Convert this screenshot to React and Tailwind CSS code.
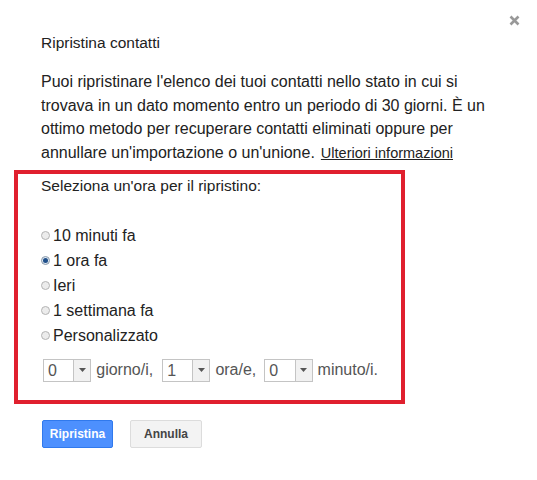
import React, { useState } from 'react'

const options = ['10 minuti fa', '1 ora fa', 'Ieri', '1 settimana fa', 'Personalizzato']

function Select({ value }) {
  return (
    <div className="flex h-[23px] w-[51px] border border-[#c4c4c4] bg-white">
      <div className="flex-1 pl-[4px] text-[16px] leading-[21px] text-[#555]">{value}</div>
      <div className="flex w-[17px] items-center justify-center border-l border-[#c4c4c4] bg-[#f1f1f1]">
        <svg width="7" height="4" viewBox="0 0 7 4">
          <path d="M0 0h7L3.5 4z" fill="#555" />
        </svg>
      </div>
    </div>
  )
}

export default function App() {
  const [selected, setSelected] = useState(1)

  return (
    <div className="relative h-[480px] w-[537px] bg-white font-['Liberation_Sans',Arial,sans-serif] text-[#222]">
      <button className="absolute right-[17px] top-[15px]">
        <svg width="11" height="11" viewBox="0 0 11 11">
          <path d="M1.5 1.5l8 8M9.5 1.5l-8 8" stroke="#999" strokeWidth="2.6" />
        </svg>
      </button>

      <div className="px-[41px] pt-[33px]">
        <h1 className="text-[15.5px] leading-[20px]">Ripristina contatti</h1>
        <p className="mt-[17px] text-[16px] leading-[23.5px]">
          Puoi ripristinare l'elenco dei tuoi contatti nello stato in cui si trovava in un dato
          momento entro un periodo di 30 giorni. È un ottimo metodo per recuperare contatti
          eliminati oppure per annullare un'importazione o un'unione.
          <a href="#" className="ml-[6px] text-[14.5px] leading-[20px] text-[#222] underline">
            Ulteriori informazioni
          </a>
        </p>
      </div>

      <div className="ml-[14px] mt-[6px] h-[234px] w-[391px] border-[4px] border-[#e0202e] px-[23px] pt-[2px]">
        <div className="text-[15.5px] leading-[20px]">Seleziona un'ora per il ripristino:</div>
        <div className="mt-[27px] flex flex-col">
          {options.map((o, i) => (
            <label key={o} className="flex h-[25px] items-center gap-[3px] text-[16px]" onClick={() => setSelected(i)}>
              <span
                className={
                  i === selected
                    ? 'flex h-[9px] w-[9px] items-center justify-center rounded-full border border-[#8a9aab] bg-[#dfe8f1]'
                    : 'h-[9px] w-[9px] rounded-full border border-[#b4b4b4] bg-[#ececec]'
                }
              >
                {i === selected && <span className="h-[5px] w-[5px] rounded-full bg-[#1f4f8a]" />}
              </span>
              <span>{o}</span>
            </label>
          ))}
        </div>
        <div className="ml-[2px] mt-[10px] flex items-center text-[16px] text-[#555]">
          <Select value="0" />
          <span className="ml-[5px] mr-[9px]">giorno/i,</span>
          <Select value="1" />
          <span className="ml-[5px] mr-[8px]">ora/e,</span>
          <Select value="0" />
          <span className="ml-[5px]">minuto/i.</span>
        </div>
      </div>

      <div className="ml-[42px] mt-[16px] flex gap-[17px]">
        <button className="h-[28px] w-[71px] rounded-[2px] border border-[#3079ed] bg-[#4d90fe] text-[12px] font-bold text-white">
          Ripristina
        </button>
        <button className="h-[28px] w-[72px] rounded-[2px] border border-[#dcdcdc] bg-[#f3f3f3] text-[12px] font-bold text-[#444]">
          Annulla
        </button>
      </div>
    </div>
  )
}
